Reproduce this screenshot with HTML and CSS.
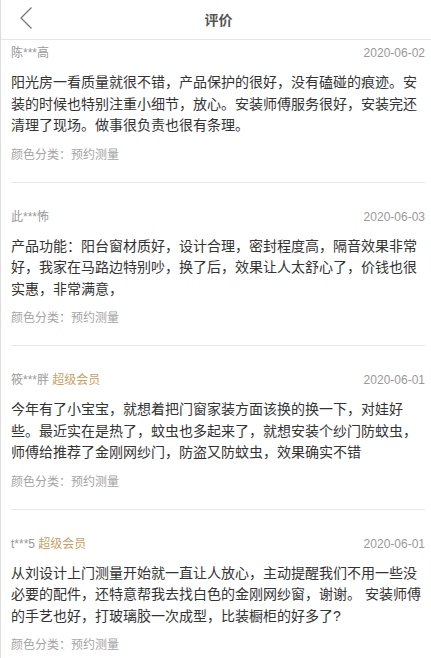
FILE: index.html
```html
<!DOCTYPE html>
<html lang="zh-CN">
<head>
<meta charset="utf-8">
<title>评价</title>
<link rel="stylesheet" href="styles.css">
</head>
<body>
<div class="page">
  <header class="topbar">
    <a class="back" aria-label="返回">
      <svg width="14" height="24" viewBox="0 0 14 24"><path d="M12.5 1.5 L2 12 L12.5 22.5" fill="none" stroke="#777" stroke-width="1.3"/></svg>
    </a>
    <h1 class="title">评价</h1>
  </header>
  <main class="list">
    <section class="review first">
      <div class="meta"><span class="user">陈***高</span><span class="date">2020-06-02</span></div>
      <p class="content">阳光房一看质量就很不错，产品保护的很好，没有磕碰的痕迹。安装的时候也特别注重小细节，放心。安装师傅服务很好，安装完还清理了现场。做事很负责也很有条理。</p>
      <div class="sku">颜色分类：预约测量</div>
    </section>
    <section class="review">
      <div class="meta"><span class="user">此***怖</span><span class="date">2020-06-03</span></div>
      <p class="content">产品功能：阳台窗材质好，设计合理，密封程度高，隔音效果非常好，我家在马路边特别吵，换了后，效果让人太舒心了，价钱也很实惠，非常满意，</p>
      <div class="sku">颜色分类：预约测量</div>
    </section>
    <section class="review">
      <div class="meta"><span class="user">筱***胖 <span class="vip">超级会员</span></span><span class="date">2020-06-01</span></div>
      <p class="content">今年有了小宝宝，就想着把门窗家装方面该换的换一下，对娃好些。最近实在是热了，蚊虫也多起来了，就想安装个纱门防蚊虫，师傅给推荐了金刚网纱门，防盗又防蚊虫，效果确实不错</p>
      <div class="sku">颜色分类：预约测量</div>
    </section>
    <section class="review">
      <div class="meta"><span class="user">t***5 <span class="vip">超级会员</span></span><span class="date">2020-06-01</span></div>
      <p class="content">从刘设计上门测量开始就一直让人放心，主动提醒我们不用一些没必要的配件，还特意帮我去找白色的金刚网纱窗，谢谢。 安装师傅的手艺也好，打玻璃胶一次成型，比装橱柜的好多了?</p>
      <div class="sku">颜色分类：预约测量</div>
    </section>
  </main>
</div>
</body>
</html>
```
FILE: styles.css
```css
html, body {
  margin: 0;
  padding: 0;
  background: #fff;
}
body {
  font-family: "Liberation Sans", "Noto Sans CJK SC", sans-serif;
  color: #333;
  overflow: hidden;
}
.page {
  border-left: 1px solid #dcdcdc;
  min-height: 658px;
  box-sizing: border-box;
}
.topbar {
  position: relative;
  height: 39px;
  border-bottom: 1px solid #e6e6e6;
  display: flex;
  align-items: center;
  justify-content: center;
  padding-left: 5px;
}
.back {
  position: absolute;
  left: 18px;
  top: 6px;
  display: block;
  width: 14px;
  height: 24px;
}
.back svg { display: block; }
.title {
  margin: 0;
  font-size: 14px;
  font-weight: bold;
  color: #555;
  line-height: 20px;
}
.list {
  padding: 0 6px 0 10px;
}
.review {
  padding: 25px 0 18px;
  border-bottom: 1px solid #e8e8e8;
}
.review.first {
  padding-top: 4px;
}
.meta {
  display: flex;
  justify-content: space-between;
  align-items: center;
  height: 18px;
  font-size: 12px;
  line-height: 18px;
  color: #999;
}
.vip {
  color: #c9a063;
}
.date {
  color: #999;
}
.content {
  margin: 10px 0 9px;
  font-size: 14px;
  line-height: 21.5px;
  color: #333;
}
.sku {
  font-size: 12px;
  line-height: 18px;
  color: #a5a5a5;
}
```
